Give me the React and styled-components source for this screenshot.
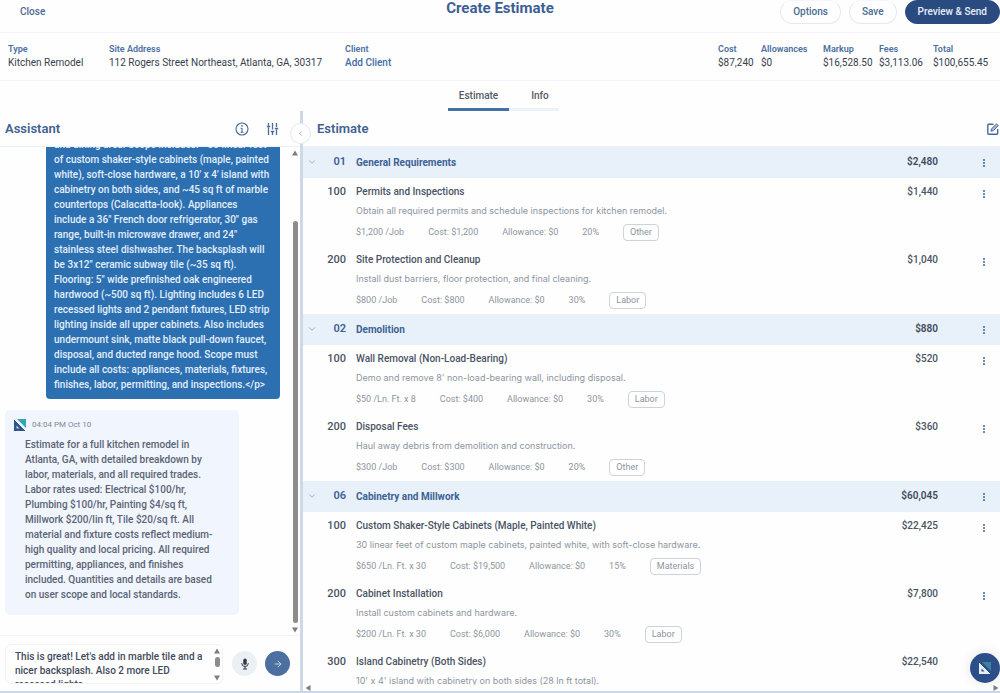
import React from 'react';
import styled, { createGlobalStyle } from 'styled-components';
import { ArrowRight, ChevronDown, ChevronLeft } from 'lucide-react';

const GlobalStyle = createGlobalStyle`
    * {
        box-sizing: border-box;
    }
    body {
        margin: 0;
        background: #fefefe;
        color: #4a5363;
        font-family: Roboto, sans-serif;
        font-size: 10px;
    }
    button, textarea {
        font-family: inherit;
        padding: 0;
        border: 0;
        background: none;
        color: inherit;
    }
    h1, h2, p, dl, dt, dd {
        margin: 0;
    }
`

const Page = styled.div`
    display: flex;
    flex-direction: column;
    height: 100vh;
    overflow: hidden;
    border-bottom: 2px solid #c9d8e6;
`

const TopBar = styled.header`
    display: grid;
    grid-template-columns: 1fr auto 1fr;
    align-items: start;
    flex: none;
    height: 33px;
    border-bottom: 1px solid #f3f4f7;
`

const CloseButton = styled.button`
    justify-self: start;
    margin-left: 20px;
    height: 23px;
    color: #4b6a94;
    font-size: 10px;
    font-weight: 500;
`

const Title = styled.h1`
    color: #3d6094;
    font-size: 15px;
    font-weight: 700;
    line-height: 17px;
`

const Actions = styled.div`
    display: flex;
    justify-self: end;
    gap: 8px;
`

const PillButton = styled.button`
    height: 24px;
    padding: 0 12px 1px;
    border: 1px solid ${(props) => (props.$primary ? '#2a4b80' : '#e3e9f2')};
    border-top-color: ${(props) => (props.$primary ? '#2a4b80' : '#f3f6fa')};
    border-radius: 12px;
    background: ${(props) => (props.$primary ? '#2a4b80' : '#fefefe')};
    color: ${(props) => (props.$primary ? '#e8eef7' : '#4b6a94')};
    font-size: 10px;
    font-weight: 500;
    white-space: nowrap;
`

const InfoBar = styled.section`
    display: flex;
    justify-content: space-between;
    flex: none;
    height: 48px;
    padding: 10px 10px 0 8px;
    border-bottom: 1px solid #f3f4f7;
`

const Facts = styled.dl`
    display: grid;
    grid-template-columns: ${(props) => props.$columns};
`

const Label = styled.dt`
    color: #4b6f9f;
    font-size: 9px;
    font-weight: 600;
    line-height: 12px;
`

const Value = styled.dd`
    color: #363e4d;
    font-size: 10px;
    line-height: 16px;
    white-space: nowrap;
`

const ClientButton = styled.button`
    color: #416ca3;
    font-size: 10px;
    font-weight: 500;
    line-height: 16px;
`

const Tabs = styled.nav`
    display: flex;
    justify-content: center;
    flex: none;
    height: 30px;
    padding-left: 7px;
`

const Tab = styled.button`
    width: ${(props) => (props.$active ? 61 : 50)}px;
    padding: ${(props) => (props.$active ? '2px 0 0' : '2px 0 0 12px')};
    border-bottom: 3px solid ${(props) => (props.$active ? '#4570a5' : '#ebf1f6')};
    color: #545a66;
    font-size: 10px;
    font-weight: 500;
`

const Split = styled.main`
    display: flex;
    flex: 1;
    min-height: 0;
`

const AssistantPane = styled.section`
    display: flex;
    flex-direction: column;
    width: 30%;
    min-width: 0;
`

const PaneHeader = styled.header`
    display: flex;
    align-items: center;
    flex: none;
    gap: 17px;
    height: 36px;
    padding: ${(props) => (props.$wide ? '0 1px 0 14px' : '0 21px 0 5px')};
    border-bottom: 1px solid #edf2f8;
`

const PaneTitle = styled.h2`
    flex: 1;
    color: #3f6192;
    font-size: 13px;
    font-weight: 600;
`

const IconButton = styled.button`
    display: flex;
    align-items: center;
    justify-content: center;
    color: #47699b;
`

const Divider = styled.div`
    position: relative;
    flex: none;
    width: 3px;
    background: #cdd9e6;
`

const Toggle = styled.button`
    position: absolute;
    top: 12px;
    left: -10px;
    display: flex;
    align-items: center;
    justify-content: center;
    width: 21px;
    height: 21px;
    border: 1px solid #e4e9ef;
    border-radius: 50%;
    background: #fefefe;
    color: #6b7480;
`

const ChatArea = styled.div`
    display: flex;
    flex: 1;
    min-height: 0;
`

const Messages = styled.div`
    display: flex;
    flex-direction: column;
    justify-content: flex-end;
    flex: 1;
    gap: 11px;
    padding: 0 10px 20px 5px;
    overflow: hidden;
`

const UserMessage = styled.p`
    flex: none;
    align-self: flex-end;
    width: 234px;
    padding: 7px 8px;
    border-radius: 4px;
    background: #2c70b2;
    color: #e3eefa;
    font-weight: 500;
    line-height: 15px;
    white-space: pre-line;
`

const Reply = styled.article`
    flex: none;
    width: 234px;
    padding: 8px 9px 13px;
    border-radius: 5px;
    background: #f1f5fe;
`

const ReplyHeader = styled.header`
    display: flex;
    align-items: center;
    gap: 6px;
    height: 13px;
    color: #808895;
    font-size: 8px;
`

const ReplyText = styled.p`
    padding: 6px 0 0 11px;
    color: #5a6473;
    font-weight: 500;
    line-height: 15px;
    white-space: pre-line;
`

const Rail = styled.div`
    display: flex;
    flex-direction: column;
    align-items: center;
    flex: none;
    width: 10px;
    padding: 3px 0 2px;
`

const Thumb = styled.div`
    width: 5px;
    margin: ${(props) => props.$margin};
    flex: 1;
    border-radius: 3px;
    background: #8c8c8c;
`

const Composer = styled.form`
    display: flex;
    align-items: center;
    flex: none;
    height: 56px;
    padding: 0 10px 0 5px;
    border-top: 1px solid #f1f4f7;
`

const InputBox = styled.div`
    display: flex;
    flex: 1;
    height: 40px;
    margin-right: 9px;
    padding-left: 9px;
    border: 1px solid #f0f3f6;
    border-radius: 6px;
`

const Prompt = styled.textarea`
    flex: 1;
    min-width: 0;
    padding-top: 5px;
    outline: 0;
    resize: none;
    overflow: hidden;
    color: #414b5c;
    font-size: 10px;
    font-weight: 500;
    line-height: 14px;
    white-space: pre;
`

const RoundButton = styled.button`
    display: flex;
    align-items: center;
    justify-content: center;
    flex: none;
    width: 25px;
    height: 25px;
    margin-left: ${(props) => (props.$send ? 8 : 0)}px;
    border-radius: 50%;
    background: ${(props) => (props.$send ? '#4b6f9e' : '#ebf0f5')};
    color: ${(props) => (props.$send ? '#d7e2ef' : '#2f3946')};
`

const EstimatePane = styled.section`
    position: relative;
    display: flex;
    flex-direction: column;
    flex: 1;
    min-width: 0;
`

const ListArea = styled.div`
    flex: 1;
    min-height: 0;
    overflow: hidden;
`

const EstimateTable = styled.table`
    width: 100%;
    border-collapse: collapse;
    table-layout: fixed;
`

const SectionRow = styled.tr`
    height: 31px;
    background: #e8f1f9;
    color: #3c6296;
`

const ItemRow = styled.tr`
    height: 68px;
    vertical-align: top;
`

const Cell = styled.td`
    padding: ${(props) => (props.$top ? '6px 0 0' : '0 0 1px')};
    text-align: ${(props) => props.$align || 'left'};
    line-height: 16px;
    font-size: 10px;
    font-weight: ${(props) => (props.$strong ? 600 : 500)};
    color: ${(props) => props.$color || 'inherit'};

    button {
        display: inline-flex;
        vertical-align: middle;
    }
`

const MenuCell = styled(Cell)`
    padding-top: ${(props) => (props.$top ? 8 : 1)}px;
    padding-right: 14px;
    text-align: right;
`

const CodeCell = styled(Cell)`
    font-size: 11px;
`

const SectionName = styled.th`
    padding: 0 0 1px 10px;
    text-align: left;
    font-size: 10px;
    font-weight: 700;
`

const ItemCell = styled.td`
    padding: 6px 0 0 10px;
`

const ItemName = styled.p`
    font-size: 10px;
    font-weight: 500;
    line-height: 16px;
`

const Description = styled.p`
    margin-top: 3px;
    color: #8d95a0;
    font-family: Inter, sans-serif;
    font-size: 9px;
    line-height: 15px;
`

const Meta = styled.div`
    display: flex;
    align-items: center;
    gap: 24px;
    height: 18px;
    margin-top: 5px;
    color: #8d95a0;
    font-size: 9px;
`

const Tag = styled.span`
    padding: 0 6px;
    border: 1px solid #ccd3da;
    border-radius: 4px;
    font-size: 9px;
    line-height: 15px;
`

const BottomRail = styled.div`
    display: flex;
    align-items: center;
    justify-content: space-between;
    flex: none;
    height: 6px;
    padding: 0 1px 0 2px;
`

const HelpButton = styled.button`
    position: absolute;
    right: 0;
    bottom: 8px;
    display: flex;
    align-items: center;
    justify-content: center;
    width: 30px;
    height: 30px;
    border-radius: 50%;
    background: #2d4f89;
    box-shadow: 0 0 6px 5px rgba(70, 80, 100, 0.05);
`

const userText = `and dining area. Scope includes: ~30 linear feet
of custom shaker-style cabinets (maple, painted
white), soft-close hardware, a 10' x 4' island with
cabinetry on both sides, and ~45 sq ft of marble
countertops (Calacatta-look). Appliances
include a 36" French door refrigerator, 30" gas
range, built-in microwave drawer, and 24"
stainless steel dishwasher. The backsplash will
be 3x12" ceramic subway tile (~35 sq ft).
Flooring: 5" wide prefinished oak engineered
hardwood (~500 sq ft). Lighting includes 6 LED
recessed lights and 2 pendant fixtures, LED strip
lighting inside all upper cabinets. Also includes
undermount sink, matte black pull-down faucet,
disposal, and ducted range hood. Scope must
include all costs: appliances, materials, fixtures,
finishes, labor, permitting, and inspections.</p>`

const replyText = `Estimate for a full kitchen remodel in
Atlanta, GA, with detailed breakdown by
labor, materials, and all required trades.
Labor rates used: Electrical $100/hr,
Plumbing $100/hr, Painting $4/sq ft,
Millwork $200/lin ft, Tile $20/sq ft. All
material and fixture costs reflect medium-
high quality and local pricing. All required
permitting, appliances, and finishes
included. Quantities and details are based
on user scope and local standards.`

const draft = `This is great! Let's add in marble tile and a
nicer backsplash. Also 2 more LED
recessed lights.`

const totals = [
    ['Cost', '$87,240'],
    ['Allowances', '$0'],
    ['Markup', '$16,528.50'],
    ['Fees', '$3,113.06'],
    ['Total', '$100,655.45'],
]

const sections = [
    {
        code: '01', name: 'General Requirements', total: '$2,480',
        items: [
            { code: '100', name: 'Permits and Inspections', total: '$1,440', text: 'Obtain all required permits and schedule inspections for kitchen remodel.', rate: '$1,200 /Job', cost: '$1,200', markup: '20%', tag: 'Other' },
            { code: '200', name: 'Site Protection and Cleanup', total: '$1,040', text: 'Install dust barriers, floor protection, and final cleaning.', rate: '$800 /Job', cost: '$800', markup: '30%', tag: 'Labor' },
        ],
    },
    {
        code: '02', name: 'Demolition', total: '$880',
        items: [
            { code: '100', name: 'Wall Removal (Non-Load-Bearing)', total: '$520', text: "Demo and remove 8' non-load-bearing wall, including disposal.", rate: '$50 /Ln. Ft. x 8', cost: '$400', markup: '30%', tag: 'Labor' },
            { code: '200', name: 'Disposal Fees', total: '$360', text: 'Haul away debris from demolition and construction.', rate: '$300 /Job', cost: '$300', markup: '20%', tag: 'Other' },
        ],
    },
    {
        code: '06', name: 'Cabinetry and Millwork', total: '$60,045',
        items: [
            { code: '100', name: 'Custom Shaker-Style Cabinets (Maple, Painted White)', total: '$22,425', text: '30 linear feet of custom maple cabinets, painted white, with soft-close hardware.', rate: '$650 /Ln. Ft. x 30', cost: '$19,500', markup: '15%', tag: 'Materials' },
            { code: '200', name: 'Cabinet Installation', total: '$7,800', text: 'Install custom cabinets and hardware.', rate: '$200 /Ln. Ft. x 30', cost: '$6,000', markup: '30%', tag: 'Labor' },
            { code: '300', name: 'Island Cabinetry (Both Sides)', total: '$22,540', text: "10' x 4' island with cabinetry on both sides (28 ln ft total)." },
        ],
    },
]

const Arrow = ({ turn = 0, size = 6 }) => (
    <svg width={size} height={size} viewBox="0 0 6 6">
        <path d="M3 .5 6 5.5H0Z" fill="#7d7d7d" transform={`rotate(${turn} 3 3)`} />
    </svg>
)

const Logo = ({ size, light }) => (
    <svg width={size} height={size} viewBox="0 0 12 12">
        <path d="M0 0 12 12H0Z" fill={light ? '#e6eef8' : '#2f5590'} />
        <path d="M3 0H12V9Z" fill={light ? '#3d7fa5' : '#35a3b8'} />
        <path d="M0 0 12 12" stroke={light ? '#2d4f89' : '#f1f5fe'} strokeWidth="1" />
        <path d="M2.5 6.5V9.500H5.500Z" fill={light ? '#2d4f89' : '#c4d3ea'} />
    </svg>
)

const InfoIcon = () => (
    <svg width="14" height="14" viewBox="0 0 14 14" fill="none" stroke="currentColor">
        <circle cx="7" cy="7" r="6" strokeWidth="1.1" />
        <path d="M7 6V10.300M5.600 6.300H7M5.500 10.300H8.500" strokeWidth="1.100" />
        <circle cx="7" cy="3.900" r=".8" fill="currentColor" stroke="none" />
    </svg>
)

const SlidersIcon = () => (
    <svg width="13" height="12" viewBox="0 0 13 12" fill="none" stroke="currentColor" strokeWidth="1.3">
        <path d="M2.500 0V2.500M2.500 4.500V12M6.500 0V6.500M6.500 8.500V12M10.500 0V4M10.500 6.500V12M.8 3.500H4.200M4.800 8.500H8.200M8.800 5.500H12.200" />
    </svg>
)

const EditIcon = () => (
    <svg width="12" height="12" viewBox="0 0 12 12" fill="none" stroke="currentColor" strokeWidth="1.4">
        <path d="M6.500 1.300H1.700Q.8 1.300.8 2.200V10.300Q.8 11.200 1.700 11.200H9.800Q10.700 11.200 10.700 10.300V6" />
        <path d="M4 8.200 4.500 5.800 9.500.9 11.300 2.600 6.400 7.600Z" fill="currentColor" fillOpacity=".45" strokeWidth="1" />
    </svg>
)

const MicIcon = () => (
    <svg width="10" height="12" viewBox="0 0 10 12" fill="none" stroke="currentColor">
        <rect x="3.300" y=".5" width="3.400" height="6.500" rx="1.700" fill="currentColor" stroke="none" />
        <path d="M1.700 5.200Q1.700 8.500 5 8.500T8.300 5.200M5 8.500V11M3 11H7" />
    </svg>
)

const DotsIcon = () => (
    <svg width="4" height="10" viewBox="0 0 4 10" fill="#4a70a5">
        <circle cx="2" cy="2" r="1.100" />
        <circle cx="2" cy="5" r="1.100" />
        <circle cx="2" cy="8" r="1.100" />
    </svg>
)

const Fact = ({ label, children }) => (
    <div>
        <Label>{label}</Label>
        <Value>{children}</Value>
    </div>
)

const Item = ({ item }) => (
    <ItemRow>
        <Cell />
        <CodeCell $top $align="right">{item.code}</CodeCell>
        <ItemCell>
            <ItemName>{item.name}</ItemName>
            <Description>{item.text}</Description>
            {item.rate && (
                <Meta>
                    <span>{item.rate}</span>
                    <span>Cost: {item.cost}</span>
                    <span>Allowance: $0</span>
                    <span>{item.markup}</span>
                    <Tag>{item.tag}</Tag>
                </Meta>
            )}
        </ItemCell>
        <Cell $top $align="right">{item.total}</Cell>
        <MenuCell $top>
            <button aria-label={`${item.name} menu`}><DotsIcon /></button>
        </MenuCell>
    </ItemRow>
)

const Section = ({ section }) => (
    <tbody>
        <SectionRow>
            <Cell $align="center" $color="#8ba3bd">
                <button aria-label={`Collapse ${section.name}`}><ChevronDown size={10} strokeWidth={2} /></button>
            </Cell>
            <CodeCell $strong $align="right">{section.code}</CodeCell>
            <SectionName scope="row">{section.name}</SectionName>
            <Cell $strong $align="right" $color="#3f4a5c">{section.total}</Cell>
            <MenuCell>
                <button aria-label={`${section.name} menu`}><DotsIcon /></button>
            </MenuCell>
        </SectionRow>
        {section.items.map((item) => <Item key={item.code} item={item} />)}
    </tbody>
)

const Assistant = () => (
    <AssistantPane>
        <PaneHeader>
            <PaneTitle>Assistant</PaneTitle>
            <IconButton aria-label="About the assistant"><InfoIcon /></IconButton>
            <IconButton aria-label="Assistant settings"><SlidersIcon /></IconButton>
        </PaneHeader>
        <ChatArea>
            <Messages>
                <UserMessage>{userText}</UserMessage>
                <Reply>
                    <ReplyHeader>
                        <Logo size={12} />
                        <time>04:04 PM Oct 10</time>
                    </ReplyHeader>
                    <ReplyText>{replyText}</ReplyText>
                </Reply>
            </Messages>
            <Rail>
                <Arrow />
                <Thumb $margin="65px 0 4px" />
                <Arrow turn={180} />
            </Rail>
        </ChatArea>
        <Composer onSubmit={(e) => e.preventDefault()}>
            <InputBox>
                <Prompt aria-label="Message" defaultValue={draft} />
                <Rail>
                    <Arrow />
                    <Thumb $margin="3px 0 8px" />
                    <Arrow turn={180} />
                </Rail>
            </InputBox>
            <RoundButton type="button" aria-label="Dictate"><MicIcon /></RoundButton>
            <RoundButton $send type="submit" aria-label="Send"><ArrowRight size={10} /></RoundButton>
        </Composer>
    </AssistantPane>
)

const Estimate = () => (
    <EstimatePane>
        <PaneHeader $wide>
            <PaneTitle>Estimate</PaneTitle>
            <IconButton aria-label="Edit estimate"><EditIcon /></IconButton>
        </PaneHeader>
        <ListArea>
            <EstimateTable>
                <colgroup>
                    <col width="18" />
                    <col width="25" />
                    <col />
                    <col width="60" />
                    <col width="62" />
                </colgroup>
                {sections.map((section) => (
                    <Section key={section.code} section={section} />
                ))}
            </EstimateTable>
        </ListArea>
        <BottomRail>
            <Arrow turn={-90} />
            <Arrow turn={90} />
        </BottomRail>
        <HelpButton aria-label="Help"><Logo size={12} light /></HelpButton>
    </EstimatePane>
)

const App = () => (
    <Page>
        <GlobalStyle />
        <TopBar>
            <CloseButton>Close</CloseButton>
            <Title>Create Estimate</Title>
            <Actions>
                <PillButton>Options</PillButton>
                <PillButton>Save</PillButton>
                <PillButton $primary>Preview &amp; Send</PillButton>
            </Actions>
        </TopBar>
        <InfoBar>
            <Facts $columns="101px 236px auto">
                <Fact label="Type">Kitchen Remodel</Fact>
                <Fact label="Site Address">112 Rogers Street Northeast, Atlanta, GA, 30317</Fact>
                <Fact label="Client"><ClientButton>Add Client</ClientButton></Fact>
            </Facts>
            <Facts $columns="43px 62px 56px 54px 57px">
                {totals.map(([label, value]) => <Fact key={label} label={label}>{value}</Fact>)}
            </Facts>
        </InfoBar>
        <Tabs>
            <Tab $active>Estimate</Tab>
            <Tab>Info</Tab>
        </Tabs>
        <Split>
            <Assistant />
            <Divider>
                <Toggle aria-label="Collapse assistant"><ChevronLeft size={7} /></Toggle>
            </Divider>
            <Estimate />
        </Split>
    </Page>
)

export default App;
